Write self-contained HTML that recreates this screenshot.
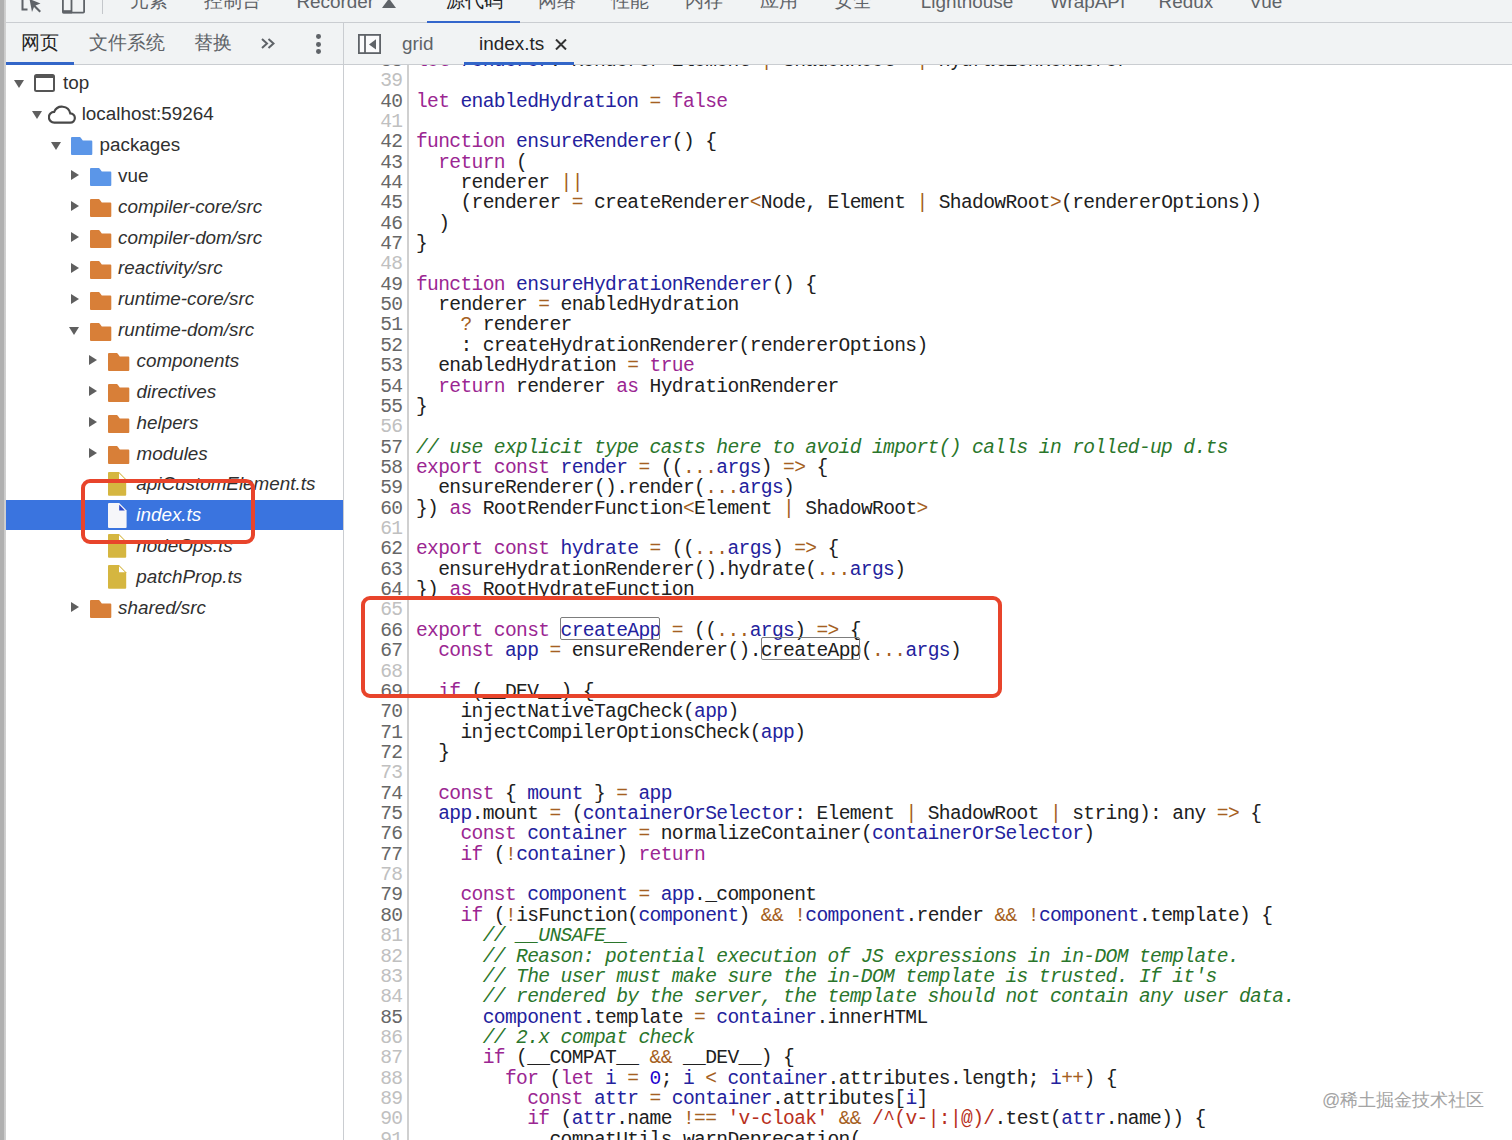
<!DOCTYPE html>
<html><head><meta charset="utf-8"><style>
*{margin:0;padding:0;box-sizing:border-box}
html,body{width:1512px;height:1140px;overflow:hidden;background:#fff}
body{position:relative;font-family:"Liberation Sans",sans-serif}
.abs,.ln,.nm,.tl,.tt,.ico,.win,.tri-d,.tri-r{position:absolute}
#strip{position:absolute;left:0;top:0;width:6px;height:1140px;background:linear-gradient(90deg,#b0b0b0 0,#b0b0b0 3.6px,#c8c8c8 3.6px,#d0d0d0 5.6px,#f4f4f4 6px)}
#topbar{position:absolute;left:6px;top:0;width:1506px;height:23px;background:#f1f3f4;border-bottom:1px solid #cacdd1}
.tt{top:-8.7px;font-size:18.9px;line-height:22px;color:#5f6368;white-space:nowrap}
.tt.on{color:#202124}
.tt.cj{top:-10.3px;font-size:18.6px}
#sub{position:absolute;left:6px;top:23px;width:1506px;height:42px;background:#f1f3f4;border-bottom:1px solid #cacdd1}
#vdiv{position:absolute;left:343px;top:22px;width:1px;height:1118px;background:#cacdd1}
.st.cj{font-size:18.6px;margin-top:-0.4px}
.st{position:absolute;font-size:18.9px;line-height:22px;color:#5f6368;white-space:nowrap}
#code{position:absolute;left:344px;top:65px;width:1168px;height:1075px;overflow:hidden;background:#fff}
.ln{left:416px;font-family:"Liberation Mono",monospace;font-size:19.6px;line-height:20.358px;letter-spacing:-0.637px;white-space:pre;color:#202020}
.nm{left:0;width:402.5px;text-align:right;font-family:"Liberation Mono",monospace;font-size:19.6px;line-height:20.358px;letter-spacing:-0.637px;color:#676767}
.nm.lt{color:#c0c0c0}
#gut{position:absolute;left:407px;top:65px;width:1.5px;height:1076px;background:#d0d0d0}
i{font-style:normal}
i.k{color:#9b2692}
i.d{color:#23229d}
i.o{color:#a55f22}
i.c{color:#2a762b;font-style:italic}
i.s{color:#b8301c}
i.n{color:#1c00cf}
.tl{font-size:18.85px;line-height:22px;color:#303030;white-space:nowrap}
.tl.it{font-style:italic}
.tl.sw{color:#fff}
.tri-d{width:0;height:0;border-left:5.65px solid transparent;border-right:5.65px solid transparent;border-top:8.1px solid #5f5f5f}
.tri-r{width:0;height:0;border-top:5.5px solid transparent;border-bottom:5.5px solid transparent;border-left:8.2px solid #5f5f5f}
.win{width:20.6px;height:18px;border:2.1px solid #555;border-top-width:4.2px;border-radius:2.5px}
#sel{position:absolute;left:6px;top:500px;width:337px;height:30px;background:#3a74df}
.redbox{position:absolute;border:4.4px solid #e8442b;border-radius:9px}
.hl{position:absolute;border:1.4px solid #7d7d7d;border-radius:2px}
#wm{position:absolute;left:1322px;top:1088.3px;font-size:18px;color:#a4a4a4;white-space:nowrap}
</style></head><body>
<div id="strip"></div>
<div id="topbar">
<svg class="abs" style="left:9px;top:0" width="30" height="14" viewBox="0 0 30 14"><path d="M7.5 -2 V9.5 H12.5" fill="none" stroke="#5f6368" stroke-width="2"/><path d="M14.5 -1 L25.5 3.5 L20.5 5.5 L26 11 L24.5 12.5 L19 7 L17 12 Z" fill="#5f6368"/></svg>
<svg class="abs" style="left:56px;top:0" width="24" height="15" viewBox="0 0 24 15"><path d="M0.9 -3 V11.8 Q0.9 12.7 1.8 12.7 H21.2 Q22.1 12.7 22.1 11.8 V-3" fill="none" stroke="#5f6368" stroke-width="1.8"/><path d="M9.5 -3 V12.5" stroke="#5f6368" stroke-width="1.8"/><rect x="0.5" y="10.2" width="9.5" height="3.2" fill="#5f6368"/></svg>
<div class="abs" style="left:96px;top:0;width:1.2px;height:14px;background:#c4c7cb"></div>
<svg class="abs" style="left:375px;top:-2px" width="16" height="11" viewBox="0 0 16 11"><path d="M1 10 L8 0.5 L15 10 Z" fill="#5f6368"/></svg>
<div class="abs" style="left:420.8px;top:20.5px;width:93px;height:2.5px;background:#3366cc"></div>
</div>
<div class="tt cj" style="left:129.9px">元素</div><div class="tt cj" style="left:204.0px">控制台</div><div class="tt" style="left:296.4px">Recorder</div><div class="tt on cj" style="left:445.5px">源代码</div><div class="tt cj" style="left:538.1px">网络</div><div class="tt cj" style="left:610.8px">性能</div><div class="tt cj" style="left:685.2px">内存</div><div class="tt cj" style="left:759.6px">应用</div><div class="tt cj" style="left:834.0px">安全</div><div class="tt" style="left:920.8px">Lighthouse</div><div class="tt" style="left:1049.9px">WrapAPI</div><div class="tt" style="left:1158.5px">Redux</div><div class="tt" style="left:1249.3px">Vue</div>
<div id="sub">
<div class="st cj" style="left:14.9px;top:9.5px;color:#252525">网页</div>
<div class="st cj" style="left:82.8px;top:9.5px">文件系统</div>
<div class="st cj" style="left:187.6px;top:9.5px">替换</div>
<svg class="abs" style="left:255px;top:15px" width="14" height="11" viewBox="0 0 14 11"><path d="M1 1 L6 5.5 L1 10 M7.5 1 L12.5 5.5 L7.5 10" fill="none" stroke="#5f6368" stroke-width="2"/></svg>
<div class="abs" style="left:310px;top:11.4px;width:4.8px;height:4.8px;border-radius:50%;background:#5f6368"></div>
<div class="abs" style="left:310px;top:18.9px;width:4.8px;height:4.8px;border-radius:50%;background:#5f6368"></div>
<div class="abs" style="left:310px;top:26.4px;width:4.8px;height:4.8px;border-radius:50%;background:#5f6368"></div>
<div class="abs" style="left:0;top:39px;width:68px;height:3px;background:#3366c8"></div>
<svg class="abs" style="left:352px;top:11px" width="23" height="20" viewBox="0 0 23 20"><rect x="1" y="1" width="21" height="18" fill="#fbfbfc"/><rect x="0.9" y="0.9" width="21.2" height="18.2" fill="none" stroke="#5f6368" stroke-width="1.8"/><path d="M7 1 V19" stroke="#5f6368" stroke-width="1.8"/><path d="M18 5.2 V15.5 L11 10.4 Z" fill="#5f6368"/></svg>
<div class="st" style="left:396px;top:10px">grid</div>
<div class="st" style="left:473px;top:10px;color:#252525">index.ts</div>
<svg class="abs" style="left:549px;top:16px" width="12" height="11" viewBox="0 0 12 11"><path d="M1 0.5 L11 10.5 M11 0.5 L1 10.5" stroke="#333" stroke-width="2"/></svg>
<div class="abs" style="left:458px;top:39px;width:110px;height:3px;background:#3366c8"></div>
</div>
<div id="vdiv"></div>
<div id="sel"></div>
<div class="tri-d" style="left:13.6px;top:79.8px"></div><div class="win" style="left:34.0px;top:74.3px"></div><div class="tl" style="left:63.0px;top:72.3px">top</div>
<div class="tri-d" style="left:32.1px;top:110.7px"></div><svg class="ico" style="left:48px;top:104.65px" width="30" height="20" viewBox="0 0 30 20"><path d="M6.40 17.65 H22.20 A4.6 4.6 0 1 0 22.32 8.45 A8.5 8.5 0 0 0 6.19 6.85 A5.4 5.4 0 0 0 6.40 17.65 Z" fill="none" stroke="#484848" stroke-width="2.2"/></svg><div class="tl" style="left:81.7px;top:103.2px">localhost:59264</div>
<div class="tri-d" style="left:50.6px;top:141.5px"></div><svg class="ico" style="left:71.1px;top:137.4px" width="22" height="19" viewBox="0 0 22 19"><path d="M1 0 H8.8 Q9.3 0 9.6 0.4 L11.8 3.4 H20.3 Q21.3 3.4 21.3 4.4 V17 Q21.3 18 20.3 18 H1 Q0 18 0 17 V1 Q0 0 1 0 Z" fill="#5b96e8"/></svg><div class="tl" style="left:99.5px;top:134.0px">packages</div>
<div class="tri-r" style="left:70.8px;top:170.2px"></div><svg class="ico" style="left:89.6px;top:168.3px" width="22" height="19" viewBox="0 0 22 19"><path d="M1 0 H8.8 Q9.3 0 9.6 0.4 L11.8 3.4 H20.3 Q21.3 3.4 21.3 4.4 V17 Q21.3 18 20.3 18 H1 Q0 18 0 17 V1 Q0 0 1 0 Z" fill="#5b96e8"/></svg><div class="tl" style="left:118.0px;top:164.9px">vue</div>
<div class="tri-r" style="left:70.8px;top:201.0px"></div><svg class="ico" style="left:89.6px;top:199.1px" width="22" height="19" viewBox="0 0 22 19"><path d="M1 0 H8.8 Q9.3 0 9.6 0.4 L11.8 3.4 H20.3 Q21.3 3.4 21.3 4.4 V17 Q21.3 18 20.3 18 H1 Q0 18 0 17 V1 Q0 0 1 0 Z" fill="#d87f38"/></svg><div class="tl it" style="left:118.0px;top:195.7px">compiler-core/src</div>
<div class="tri-r" style="left:70.8px;top:231.9px"></div><svg class="ico" style="left:89.6px;top:230.0px" width="22" height="19" viewBox="0 0 22 19"><path d="M1 0 H8.8 Q9.3 0 9.6 0.4 L11.8 3.4 H20.3 Q21.3 3.4 21.3 4.4 V17 Q21.3 18 20.3 18 H1 Q0 18 0 17 V1 Q0 0 1 0 Z" fill="#d87f38"/></svg><div class="tl it" style="left:118.0px;top:226.6px">compiler-dom/src</div>
<div class="tri-r" style="left:70.8px;top:262.7px"></div><svg class="ico" style="left:89.6px;top:260.8px" width="22" height="19" viewBox="0 0 22 19"><path d="M1 0 H8.8 Q9.3 0 9.6 0.4 L11.8 3.4 H20.3 Q21.3 3.4 21.3 4.4 V17 Q21.3 18 20.3 18 H1 Q0 18 0 17 V1 Q0 0 1 0 Z" fill="#d87f38"/></svg><div class="tl it" style="left:118.0px;top:257.4px">reactivity/src</div>
<div class="tri-r" style="left:70.8px;top:293.6px"></div><svg class="ico" style="left:89.6px;top:291.6px" width="22" height="19" viewBox="0 0 22 19"><path d="M1 0 H8.8 Q9.3 0 9.6 0.4 L11.8 3.4 H20.3 Q21.3 3.4 21.3 4.4 V17 Q21.3 18 20.3 18 H1 Q0 18 0 17 V1 Q0 0 1 0 Z" fill="#d87f38"/></svg><div class="tl it" style="left:118.0px;top:288.2px">runtime-core/src</div>
<div class="tri-d" style="left:69.1px;top:326.6px"></div><svg class="ico" style="left:89.6px;top:322.5px" width="22" height="19" viewBox="0 0 22 19"><path d="M1 0 H8.8 Q9.3 0 9.6 0.4 L11.8 3.4 H20.3 Q21.3 3.4 21.3 4.4 V17 Q21.3 18 20.3 18 H1 Q0 18 0 17 V1 Q0 0 1 0 Z" fill="#d87f38"/></svg><div class="tl it" style="left:118.0px;top:319.1px">runtime-dom/src</div>
<div class="tri-r" style="left:89.3px;top:355.3px"></div><svg class="ico" style="left:108.1px;top:353.4px" width="22" height="19" viewBox="0 0 22 19"><path d="M1 0 H8.8 Q9.3 0 9.6 0.4 L11.8 3.4 H20.3 Q21.3 3.4 21.3 4.4 V17 Q21.3 18 20.3 18 H1 Q0 18 0 17 V1 Q0 0 1 0 Z" fill="#d87f38"/></svg><div class="tl it" style="left:136.5px;top:350.0px">components</div>
<div class="tri-r" style="left:89.3px;top:386.1px"></div><svg class="ico" style="left:108.1px;top:384.2px" width="22" height="19" viewBox="0 0 22 19"><path d="M1 0 H8.8 Q9.3 0 9.6 0.4 L11.8 3.4 H20.3 Q21.3 3.4 21.3 4.4 V17 Q21.3 18 20.3 18 H1 Q0 18 0 17 V1 Q0 0 1 0 Z" fill="#d87f38"/></svg><div class="tl it" style="left:136.5px;top:380.8px">directives</div>
<div class="tri-r" style="left:89.3px;top:417.0px"></div><svg class="ico" style="left:108.1px;top:415.1px" width="22" height="19" viewBox="0 0 22 19"><path d="M1 0 H8.8 Q9.3 0 9.6 0.4 L11.8 3.4 H20.3 Q21.3 3.4 21.3 4.4 V17 Q21.3 18 20.3 18 H1 Q0 18 0 17 V1 Q0 0 1 0 Z" fill="#d87f38"/></svg><div class="tl it" style="left:136.5px;top:411.7px">helpers</div>
<div class="tri-r" style="left:89.3px;top:447.8px"></div><svg class="ico" style="left:108.1px;top:445.9px" width="22" height="19" viewBox="0 0 22 19"><path d="M1 0 H8.8 Q9.3 0 9.6 0.4 L11.8 3.4 H20.3 Q21.3 3.4 21.3 4.4 V17 Q21.3 18 20.3 18 H1 Q0 18 0 17 V1 Q0 0 1 0 Z" fill="#d87f38"/></svg><div class="tl it" style="left:136.5px;top:442.5px">modules</div>
<svg class="ico" style="left:108.3px;top:472.2px" width="19" height="25" viewBox="0 0 19 25"><path d="M1 0 H11 L18.2 7.2 V22.7 Q18.2 23.7 17.2 23.7 H1 Q0 23.7 0 22.7 V1 Q0 0 1 0 Z" fill="#d5b640"/><path d="M11 1.2 V7.2 H17 Z" fill="#fff"/></svg><div class="tl it" style="left:136.3px;top:473.4px">apiCustomElement.ts</div>
<svg class="ico" style="left:108.3px;top:503.0px" width="19" height="25" viewBox="0 0 19 25"><path d="M1 0 H11.2 L18.6 7.4 V23.9 Q18.6 24.9 17.6 24.9 H1 Q0 24.9 0 23.9 V1 Q0 0 1 0 Z" fill="#f6f6f9"/><path d="M11.2 1.8 V7.4 H16.8 Z" fill="#2c47c6"/></svg><div class="tl it sw" style="left:136.3px;top:504.2px">index.ts</div>
<svg class="ico" style="left:108.3px;top:533.8px" width="19" height="25" viewBox="0 0 19 25"><path d="M1 0 H11 L18.2 7.2 V22.7 Q18.2 23.7 17.2 23.7 H1 Q0 23.7 0 22.7 V1 Q0 0 1 0 Z" fill="#d5b640"/><path d="M11 1.2 V7.2 H17 Z" fill="#fff"/></svg><div class="tl it" style="left:136.3px;top:535.0px">nodeOps.ts</div>
<svg class="ico" style="left:108.3px;top:564.7px" width="19" height="25" viewBox="0 0 19 25"><path d="M1 0 H11 L18.2 7.2 V22.7 Q18.2 23.7 17.2 23.7 H1 Q0 23.7 0 22.7 V1 Q0 0 1 0 Z" fill="#d5b640"/><path d="M11 1.2 V7.2 H17 Z" fill="#fff"/></svg><div class="tl it" style="left:136.3px;top:565.9px">patchProp.ts</div>
<div class="tri-r" style="left:70.8px;top:602.0px"></div><svg class="ico" style="left:89.6px;top:600.1px" width="22" height="19" viewBox="0 0 22 19"><path d="M1 0 H8.8 Q9.3 0 9.6 0.4 L11.8 3.4 H20.3 Q21.3 3.4 21.3 4.4 V17 Q21.3 18 20.3 18 H1 Q0 18 0 17 V1 Q0 0 1 0 Z" fill="#d87f38"/></svg><div class="tl it" style="left:118.0px;top:596.8px">shared/src</div>
<div id="code"><div style="position:absolute;left:-344px;top:-65px;width:1512px;height:1140px">
<div class="nm" style="top:50.79px">38</div>
<div class="nm lt" style="top:71.15px">39</div>
<div class="nm" style="top:91.51px">40</div>
<div class="nm lt" style="top:111.86px">41</div>
<div class="nm" style="top:132.22px">42</div>
<div class="nm" style="top:152.58px">43</div>
<div class="nm" style="top:172.94px">44</div>
<div class="nm" style="top:193.30px">45</div>
<div class="nm" style="top:213.65px">46</div>
<div class="nm" style="top:234.01px">47</div>
<div class="nm lt" style="top:254.37px">48</div>
<div class="nm" style="top:274.73px">49</div>
<div class="nm" style="top:295.09px">50</div>
<div class="nm" style="top:315.44px">51</div>
<div class="nm" style="top:335.80px">52</div>
<div class="nm" style="top:356.16px">53</div>
<div class="nm" style="top:376.52px">54</div>
<div class="nm" style="top:396.88px">55</div>
<div class="nm lt" style="top:417.23px">56</div>
<div class="nm" style="top:437.59px">57</div>
<div class="nm" style="top:457.95px">58</div>
<div class="nm" style="top:478.31px">59</div>
<div class="nm" style="top:498.67px">60</div>
<div class="nm lt" style="top:519.02px">61</div>
<div class="nm" style="top:539.38px">62</div>
<div class="nm" style="top:559.74px">63</div>
<div class="nm" style="top:580.10px">64</div>
<div class="nm lt" style="top:600.46px">65</div>
<div class="nm" style="top:620.81px">66</div>
<div class="nm" style="top:641.17px">67</div>
<div class="nm lt" style="top:661.53px">68</div>
<div class="nm" style="top:681.89px">69</div>
<div class="nm" style="top:702.25px">70</div>
<div class="nm" style="top:722.60px">71</div>
<div class="nm" style="top:742.96px">72</div>
<div class="nm lt" style="top:763.32px">73</div>
<div class="nm" style="top:783.68px">74</div>
<div class="nm" style="top:804.04px">75</div>
<div class="nm" style="top:824.39px">76</div>
<div class="nm" style="top:844.75px">77</div>
<div class="nm lt" style="top:865.11px">78</div>
<div class="nm" style="top:885.47px">79</div>
<div class="nm" style="top:905.83px">80</div>
<div class="nm lt" style="top:926.18px">81</div>
<div class="nm lt" style="top:946.54px">82</div>
<div class="nm lt" style="top:966.90px">83</div>
<div class="nm lt" style="top:987.26px">84</div>
<div class="nm" style="top:1007.62px">85</div>
<div class="nm lt" style="top:1027.97px">86</div>
<div class="nm lt" style="top:1048.33px">87</div>
<div class="nm lt" style="top:1068.69px">88</div>
<div class="nm lt" style="top:1089.05px">89</div>
<div class="nm lt" style="top:1109.41px">90</div>
<div class="nm lt" style="top:1129.76px">91</div>
<div class="ln" style="top:50.79px"><i class="k">let</i> <i class="d">renderer</i>: Renderer<i class="o">&lt;</i>Element <i class="o">|</i> ShadowRoot<i class="o">&gt;</i> <i class="o">|</i> HydrationRenderer</div>
<div class="ln" style="top:71.15px"></div>
<div class="ln" style="top:91.51px"><i class="k">let</i> <i class="d">enabledHydration</i> <i class="o">=</i> <i class="k">false</i></div>
<div class="ln" style="top:111.86px"></div>
<div class="ln" style="top:132.22px"><i class="k">function</i> <i class="d">ensureRenderer</i>() {</div>
<div class="ln" style="top:152.58px">  <i class="k">return</i> (</div>
<div class="ln" style="top:172.94px">    renderer <i class="o">||</i></div>
<div class="ln" style="top:193.30px">    (renderer <i class="o">=</i> createRenderer<i class="o">&lt;</i>Node, Element <i class="o">|</i> ShadowRoot<i class="o">&gt;</i>(rendererOptions))</div>
<div class="ln" style="top:213.65px">  )</div>
<div class="ln" style="top:234.01px">}</div>
<div class="ln" style="top:254.37px"></div>
<div class="ln" style="top:274.73px"><i class="k">function</i> <i class="d">ensureHydrationRenderer</i>() {</div>
<div class="ln" style="top:295.09px">  renderer <i class="o">=</i> enabledHydration</div>
<div class="ln" style="top:315.44px">    <i class="o">?</i> renderer</div>
<div class="ln" style="top:335.80px">    : createHydrationRenderer(rendererOptions)</div>
<div class="ln" style="top:356.16px">  enabledHydration <i class="o">=</i> <i class="k">true</i></div>
<div class="ln" style="top:376.52px">  <i class="k">return</i> renderer <i class="k">as</i> HydrationRenderer</div>
<div class="ln" style="top:396.88px">}</div>
<div class="ln" style="top:417.23px"></div>
<div class="ln" style="top:437.59px"><i class="c">// use explicit type casts here to avoid import() calls in rolled-up d.ts</i></div>
<div class="ln" style="top:457.95px"><i class="k">export</i> <i class="k">const</i> <i class="d">render</i> <i class="o">=</i> ((<i class="o">...</i><i class="d">args</i>) <i class="o">=&gt;</i> {</div>
<div class="ln" style="top:478.31px">  ensureRenderer().render(<i class="o">...</i><i class="d">args</i>)</div>
<div class="ln" style="top:498.67px">}) <i class="k">as</i> RootRenderFunction<i class="o">&lt;</i>Element <i class="o">|</i> ShadowRoot<i class="o">&gt;</i></div>
<div class="ln" style="top:519.02px"></div>
<div class="ln" style="top:539.38px"><i class="k">export</i> <i class="k">const</i> <i class="d">hydrate</i> <i class="o">=</i> ((<i class="o">...</i><i class="d">args</i>) <i class="o">=&gt;</i> {</div>
<div class="ln" style="top:559.74px">  ensureHydrationRenderer().hydrate(<i class="o">...</i><i class="d">args</i>)</div>
<div class="ln" style="top:580.10px">}) <i class="k">as</i> RootHydrateFunction</div>
<div class="ln" style="top:600.46px"></div>
<div class="ln" style="top:620.81px"><i class="k">export</i> <i class="k">const</i> <i class="d">createApp</i> <i class="o">=</i> ((<i class="o">...</i><i class="d">args</i>) <i class="o">=&gt;</i> {</div>
<div class="ln" style="top:641.17px">  <i class="k">const</i> <i class="d">app</i> <i class="o">=</i> ensureRenderer().createApp(<i class="o">...</i><i class="d">args</i>)</div>
<div class="ln" style="top:661.53px"></div>
<div class="ln" style="top:681.89px">  <i class="k">if</i> (__DEV__) {</div>
<div class="ln" style="top:702.25px">    injectNativeTagCheck(<i class="d">app</i>)</div>
<div class="ln" style="top:722.60px">    injectCompilerOptionsCheck(<i class="d">app</i>)</div>
<div class="ln" style="top:742.96px">  }</div>
<div class="ln" style="top:763.32px"></div>
<div class="ln" style="top:783.68px">  <i class="k">const</i> { <i class="d">mount</i> } <i class="o">=</i> <i class="d">app</i></div>
<div class="ln" style="top:804.04px">  <i class="d">app</i>.mount <i class="o">=</i> (<i class="d">containerOrSelector</i>: Element <i class="o">|</i> ShadowRoot <i class="o">|</i> string): any <i class="o">=&gt;</i> {</div>
<div class="ln" style="top:824.39px">    <i class="k">const</i> <i class="d">container</i> <i class="o">=</i> normalizeContainer(<i class="d">containerOrSelector</i>)</div>
<div class="ln" style="top:844.75px">    <i class="k">if</i> (<i class="o">!</i><i class="d">container</i>) <i class="k">return</i></div>
<div class="ln" style="top:865.11px"></div>
<div class="ln" style="top:885.47px">    <i class="k">const</i> <i class="d">component</i> <i class="o">=</i> <i class="d">app</i>._component</div>
<div class="ln" style="top:905.83px">    <i class="k">if</i> (<i class="o">!</i>isFunction(<i class="d">component</i>) <i class="o">&amp;&amp;</i> <i class="o">!</i><i class="d">component</i>.render <i class="o">&amp;&amp;</i> <i class="o">!</i><i class="d">component</i>.template) {</div>
<div class="ln" style="top:926.18px">      <i class="c">// __UNSAFE__</i></div>
<div class="ln" style="top:946.54px">      <i class="c">// Reason: potential execution of JS expressions in in-DOM template.</i></div>
<div class="ln" style="top:966.90px">      <i class="c">// The user must make sure the in-DOM template is trusted. If it&#x27;s</i></div>
<div class="ln" style="top:987.26px">      <i class="c">// rendered by the server, the template should not contain any user data.</i></div>
<div class="ln" style="top:1007.62px">      <i class="d">component</i>.template <i class="o">=</i> <i class="d">container</i>.innerHTML</div>
<div class="ln" style="top:1027.97px">      <i class="c">// 2.x compat check</i></div>
<div class="ln" style="top:1048.33px">      <i class="k">if</i> (__COMPAT__ <i class="o">&amp;&amp;</i> __DEV__) {</div>
<div class="ln" style="top:1068.69px">        <i class="k">for</i> (<i class="k">let</i> <i class="d">i</i> <i class="o">=</i> <i class="n">0</i>; <i class="d">i</i> <i class="o">&lt;</i> <i class="d">container</i>.attributes.length; <i class="d">i</i><i class="o">++</i>) {</div>
<div class="ln" style="top:1089.05px">          <i class="k">const</i> <i class="d">attr</i> <i class="o">=</i> <i class="d">container</i>.attributes[<i class="d">i</i>]</div>
<div class="ln" style="top:1109.41px">          <i class="k">if</i> (<i class="d">attr</i>.name <i class="o">!==</i> <i class="s">&#x27;v-cloak&#x27;</i> <i class="o">&amp;&amp;</i> <i class="s">/^(v-|:|@)/</i>.test(<i class="d">attr</i>.name)) {</div>
<div class="ln" style="top:1129.76px">            compatUtils.warnDeprecation(</div>
</div></div>
<div id="gut"></div>
<div class="hl" style="left:560px;top:617px;width:99.5px;height:22.5px"></div>
<div class="hl" style="left:761.3px;top:637.4px;width:98.6px;height:22.2px"></div>
<div class="redbox" style="left:361px;top:596px;width:641px;height:102px"></div>
<div class="redbox" style="left:81px;top:479px;width:174px;height:65px"></div>
<div id="wm">@稀土掘金技术社区</div>
</body></html>
